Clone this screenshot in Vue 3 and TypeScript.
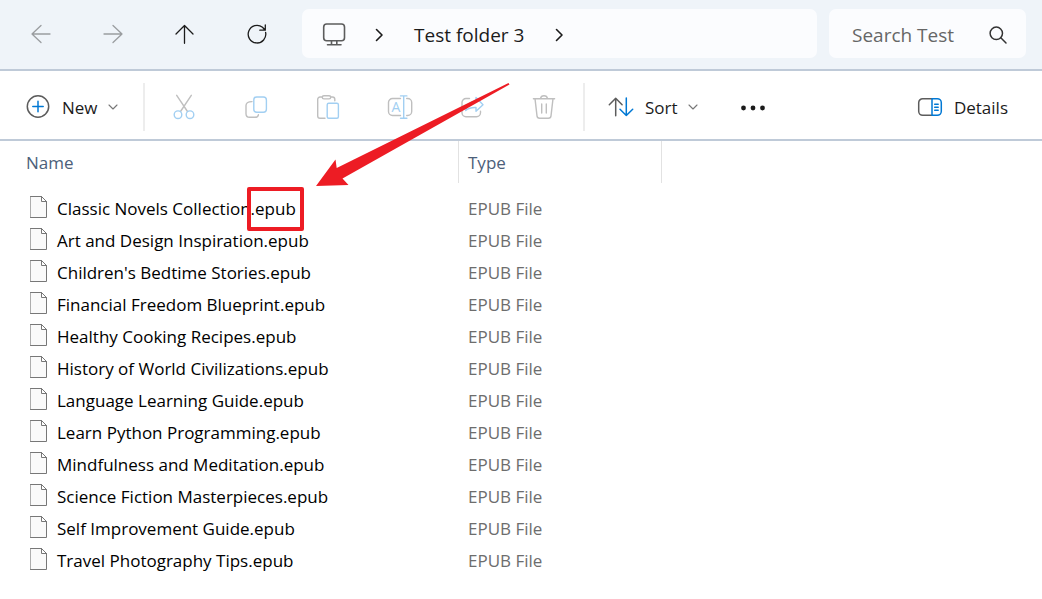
<script setup lang="ts">
import { ref } from 'vue'

interface FileEntry {
  stem: string
  ext: string
  type: string
}

const folder = 'Test folder 3'
const query = ref('')

const files: FileEntry[] = [
  'Classic Novels Collection',
  'Art and Design Inspiration',
  "Children's Bedtime Stories",
  'Financial Freedom Blueprint',
  'Healthy Cooking Recipes',
  'History of World Civilizations',
  'Language Learning Guide',
  'Learn Python Programming',
  'Mindfulness and Meditation',
  'Science Fiction Masterpieces',
  'Self Improvement Guide',
  'Travel Photography Tips',
].map((stem) => ({ stem, ext: '.epub', type: 'EPUB File' }))
</script>

<template>
  <div class="explorer">
    <header class="navbar">
      <nav class="nav-buttons" aria-label="Navigation">
        <button class="tool" type="button" aria-label="Back" disabled>
          <svg class="icon faded" viewBox="0 0 28 28"><path d="M23 14H5M14 5.500L5 14l9 8.500" /></svg>
        </button>
        <button class="tool" type="button" aria-label="Forward" disabled>
          <svg class="icon faded" viewBox="0 0 28 28"><path d="M5 14h18M14 5.500L23 14l-9 8.500" /></svg>
        </button>
        <button class="tool" type="button" aria-label="Up">
          <svg class="icon" viewBox="0 0 28 28"><path d="M13.500 23.300V5.500M5 14l8.500-8.500L22 14" /></svg>
        </button>
        <button class="tool" type="button" aria-label="Refresh">
          <svg class="icon" viewBox="0 0 28 28"><path d="M22.600 12.300A8.800 8.800 0 1 1 19.500 7.300L22 10M22.300 5v5.200h-5.500" /></svg>
        </button>
      </nav>
      <div class="address">
        <button class="crumb-root" type="button" aria-label="This PC">
          <svg class="icon monitor" viewBox="0 0 28 28">
            <rect x="3.700" y="3" width="20.800" height="16.800" rx="3" />
            <path d="M11.500 20v3.500M16.800 20v3.500M7.500 23.800h13.500" />
          </svg>
        </button>
        <svg class="crumb-sep" viewBox="0 0 12 16"><path d="M3.500 2.500L9 8l-5.500 5.500" /></svg>
        <button class="crumb" type="button">{{ folder }}</button>
        <svg class="crumb-sep" viewBox="0 0 12 16"><path d="M3.500 2.500L9 8l-5.500 5.500" /></svg>
      </div>
      <label class="search">
        <input v-model="query" type="text" placeholder="Search Test" aria-label="Search Test" />
        <svg class="search-icon" viewBox="0 0 20 20"><circle cx="8.300" cy="8.300" r="6.200" /><path d="M12.800 12.800l5.200 5.200" /></svg>
      </label>
    </header>

    <div class="toolbar" role="toolbar" aria-label="Commands">
      <button class="command new" type="button">
        <svg class="icon" viewBox="0 0 28 28">
          <circle class="dark" cx="14" cy="13.500" r="10.700" />
          <path class="blue" d="M14 8.300v10.400M8.800 13.500h10.400" />
        </svg>
        <span class="label">New</span>
        <svg class="chevron" viewBox="0 0 10 8"><path d="M1 2l4 4 4-4" /></svg>
      </button>
      <span class="divider"></span>
      <div class="actions">
        <button class="tool" type="button" aria-label="Cut" disabled>
          <svg class="icon muted" viewBox="0 0 28 28">
            <path d="M6.700 2.300l10.800 16.200M21.300 2.300L10.500 18.500" />
            <circle class="accent" cx="8" cy="21.700" r="3.800" />
            <circle class="accent" cx="20" cy="21.700" r="3.800" />
          </svg>
        </button>
        <button class="tool" type="button" aria-label="Copy" disabled>
          <svg class="icon muted" viewBox="0 0 28 28">
            <path d="M10 8.600c-4 0-6 1-6 4v8.200c0 2.300 1.200 3.500 3.500 3.500H13c2 0 3.200-1 3.400-2.500" />
            <rect class="accent" x="11.800" y="4" width="12.600" height="15.200" rx="3" />
          </svg>
        </button>
        <button class="tool" type="button" aria-label="Paste" disabled>
          <svg class="icon muted" viewBox="0 0 28 28">
            <path d="M11 25.300H6a2.300 2.300 0 0 1-2.300-2.300V6.300A2.300 2.300 0 0 1 6 4h2.300M16.700 4h1.800a2.300 2.300 0 0 1 2.300 2.300v1.500" />
            <rect x="8.300" y="2.700" width="8.400" height="3.200" rx="1.600" />
            <rect class="accent" x="13.200" y="10.200" width="11.200" height="15.100" rx="1.500" />
          </svg>
        </button>
        <button class="tool" type="button" aria-label="Rename" disabled>
          <svg class="icon muted" viewBox="0 0 28 28">
            <path d="M14.500 22.500H6.500a4 4 0 0 1-4-4v-9a4 4 0 0 1 4-4h8M20.700 5.500h1a4 4 0 0 1 4 4v9a4 4 0 0 1-4 4h-1" />
            <path class="accent" d="M17.700 2.900v22.400M14.500 2.900h6.400M14.500 25.300h6.400" />
            <text class="rename-letter" x="10" y="18.500">A</text>
          </svg>
        </button>
        <button class="tool" type="button" aria-label="Share" disabled>
          <svg class="icon muted" viewBox="0 0 28 28">
            <path d="M11.500 5.500H8A4 4 0 0 0 4 9.500v10.300a4 4 0 0 0 4 4h10.500a4 4 0 0 0 4-4v-1.500" />
            <path class="accent" d="M18 4.500L25 11.700 18 18.300V14.500C13 14.300 10 15.500 7.700 17.500 8.500 12 12 8.600 18 8.300Z" />
          </svg>
        </button>
        <button class="tool" type="button" aria-label="Delete" disabled>
          <svg class="icon muted" viewBox="0 0 28 28">
            <path d="M3.400 5.700h21.200M10.500 5.500c.3-1.800 1.700-2.800 3.500-2.800s3.200 1 3.500 2.800M5 5.700l2 17.200a2.600 2.600 0 0 0 2.600 2.400h8.800a2.600 2.600 0 0 0 2.600-2.400l2-17.200M11.700 11v9M16.300 11v9" />
          </svg>
        </button>
      </div>
      <span class="divider"></span>
      <button class="command sort" type="button">
        <svg class="icon" viewBox="0 0 28 28">
          <path class="dark" d="M8.700 22.800V5.300M2.300 11.700l6.400-6.400 6.400 6.400" />
          <path class="blue" d="M19.300 5v17.500M13 16.200l6.300 6.300 6.400-6.300" />
        </svg>
        <span class="label">Sort</span>
        <svg class="chevron" viewBox="0 0 10 8"><path d="M1 2l4 4 4-4" /></svg>
      </button>
      <button class="command more" type="button" aria-label="See more">
        <svg class="icon" viewBox="0 0 28 28">
          <circle cx="4.500" cy="15" r="2.400" /><circle cx="14" cy="15" r="2.400" /><circle cx="23.500" cy="15" r="2.400" />
        </svg>
      </button>
      <button class="command details" type="button">
        <svg class="icon" viewBox="0 0 28 28">
          <path class="dark" d="M16 5.700H6.700a4 4 0 0 0-4 4v8.600a4 4 0 0 0 4 4H16" />
          <path class="blue" d="M16 5.700h5.300a4 4 0 0 1 4 4v8.600a4 4 0 0 1-4 4H16zM18.700 11.300h3.500M18.700 14.300h3.500M18.700 17.300h3.500" />
        </svg>
        <span class="label">Details</span>
      </button>
    </div>

    <main class="listing">
      <table class="files">
        <colgroup>
          <col class="col-name" />
          <col class="col-type" />
          <col />
        </colgroup>
        <thead>
          <tr>
            <th scope="col"><div class="heading first">Name</div></th>
            <th scope="col"><div class="heading">Type</div></th>
            <td></td>
          </tr>
        </thead>
        <tbody>
          <tr v-for="(file, index) in files" :key="file.stem">
            <td>
              <div class="name">
                <svg class="file-icon" viewBox="0 0 17 22">
                  <path d="M.5.500h11l5 5v16H.5zM11.500.500v5h5" />
                </svg>
                <span>{{ file.stem }}<span class="ext">{{ file.ext }}<span v-if="index === 0" class="highlight">
                  <svg class="pointer" viewBox="0 0 194 104"><path d="M0 103L19.500 76.500 20.700 85 192.500 0l1 1.500L26.500 95.500l6 6.500z" /></svg>
                </span></span></span>
              </div>
            </td>
            <td class="type">{{ file.type }}</td>
            <td></td>
          </tr>
        </tbody>
      </table>
    </main>
  </div>
</template>

<style>
body {
  background: #fff;
}
</style>

<style scoped>
.explorer {
  min-height: 100vh;
  background: #fff;
  color: #1b1b1b;
  font-family: "Open Sans", "Noto Sans", sans-serif;
  font-size: 17px;
  line-height: 24px;
}

button,
input {
  border: 0;
  padding: 0;
  background: none;
  color: inherit;
  font: inherit;
}

svg {
  display: block;
  flex: none;
  fill: none;
  stroke: currentColor;
  stroke-width: 1.3;
  stroke-linejoin: round;
  stroke-linecap: round;
}

.icon {
  width: 28px;
  height: 28px;
}

.navbar {
  display: flex;
  align-items: center;
  gap: 12px;
  padding: 9px 16px 11px 5px;
  background: #eff4f9;
  border-bottom: 2px solid #bfcad8;
}

.nav-buttons,
.actions {
  display: flex;
}

.nav-buttons {
  margin-right: -3px;
}

.tool {
  display: flex;
  align-items: center;
  justify-content: center;
  width: 72px;
  height: 48px;
}

.faded {
  color: #9a9da0;
}

.address,
.search {
  display: flex;
  align-items: center;
  box-sizing: border-box;
  height: 49px;
  padding-top: 2px;
  border-radius: 7px;
  background: #fbfcfe;
  font-size: 19px;
}

.address {
  flex: 1;
  gap: 29px;
  padding-left: 18px;
}

.crumb-root {
  margin-right: -4px;
}

.monitor {
  color: #5c5c5c;
  stroke-width: 1.6;
}

.crumb-sep {
  width: 12px;
  height: 16px;
  stroke-width: 1.6;
}

.search {
  width: 197px;
  padding-right: 18px;
  padding-left: 23px;
}

.search input {
  flex: 1;
  min-width: 0;
  outline: 0;
}

.search input::placeholder {
  color: #666;
  opacity: 1;
}

.search-icon {
  width: 20px;
  height: 20px;
  color: #333;
  stroke-width: 1.5;
}

.toolbar {
  display: flex;
  align-items: center;
  padding: 12px 34px 8px 24px;
  border-bottom: 2px solid #bfcad8;
}

.divider {
  width: 2px;
  height: 48px;
  background: #ededed;
}

.command {
  display: flex;
  align-items: center;
  gap: 10px;
  height: 48px;
}

.label {
  padding-top: 2px;
}

.new {
  width: 119px;
}

.actions {
  padding: 0 3px;
}

.chevron {
  width: 10px;
  height: 8px;
  color: #777;
  stroke-width: 1.1;
}

.dark {
  stroke: #5c5c5c;
  stroke-width: 1.5;
}

.blue {
  stroke: #0078d4;
  stroke-width: 1.5;
}

.muted {
  color: #bfbfbf;
  stroke-width: 1.4;
}

.accent {
  stroke: #a2cff2;
}

.rename-letter {
  fill: #a2cff2;
  stroke: none;
  font-size: 14px;
  text-anchor: middle;
}

.sort {
  margin-left: 22px;
}

.more {
  margin-left: 41px;
}

.more .icon {
  fill: currentColor;
  stroke: none;
}

.details {
  margin-left: auto;
}

.files {
  width: 100%;
  table-layout: fixed;
  border-collapse: collapse;
}

.col-name {
  width: 459px;
}

.col-type {
  width: 203px;
}

th,
td {
  padding: 0;
  text-align: left;
  font-weight: 400;
}

.heading {
  height: 32px;
  margin-bottom: 10px;
  padding: 10px 0 0 9px;
  border-right: 1px solid #e2e2e2;
  color: #4c607a;
}

.heading.first {
  padding-left: 26px;
}

.name {
  display: flex;
  align-items: center;
  gap: 10px;
  height: 32px;
  padding-left: 30px;
  color: #000;
  white-space: nowrap;
}

.file-icon {
  width: 17px;
  height: 22px;
  margin-bottom: 4px;
  fill: #fafafa;
  stroke: #777;
  stroke-width: 1;
  stroke-linejoin: miter;
}

.type {
  padding-left: 9px;
  color: #6d6d6d;
}

.ext {
  position: relative;
}

.highlight {
  position: absolute;
  top: -10px;
  left: -4px;
  right: -8px;
  height: 36px;
  border: 4px solid #ed1c24;
  border-radius: 2px;
}

.pointer {
  position: absolute;
  left: 65px;
  bottom: 40px;
  width: 194px;
  height: 104px;
  fill: #ed1c24;
  stroke: none;
}
</style>
